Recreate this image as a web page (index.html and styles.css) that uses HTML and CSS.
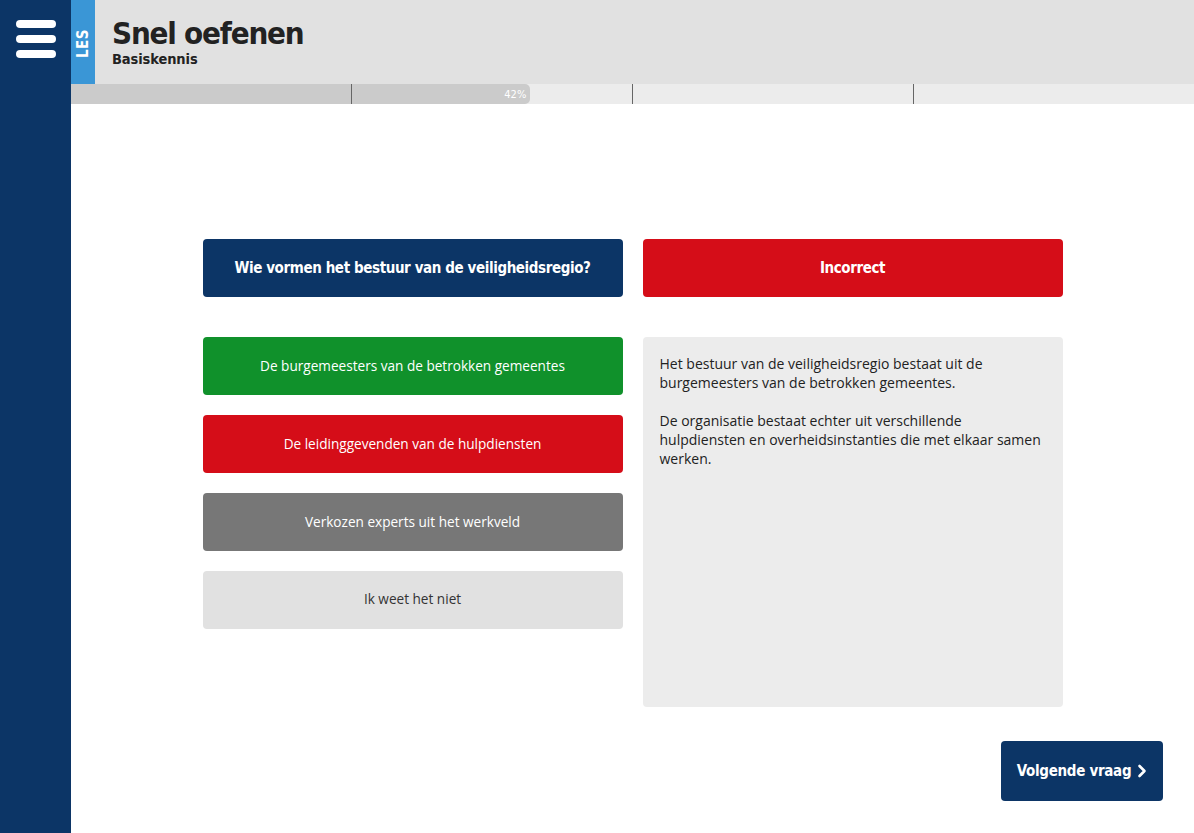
FILE: index.html
```html
<!DOCTYPE html>
<html lang="nl">
<head>
<meta charset="utf-8">
<title>Snel oefenen</title>
<link rel="stylesheet" href="styles.css">
</head>
<body>
<div class="app">
  <aside class="sidebar">
    <button class="menu" aria-label="Menu">
      <span class="bar"></span><span class="bar"></span><span class="bar"></span>
    </button>
  </aside>
  <div class="main">
    <header class="header">
      <div class="tag"><span>LES</span></div>
      <div class="titles">
        <h1 class="title">Snel oefenen</h1>
        <div class="subtitle">Basiskennis</div>
      </div>
    </header>
    <div class="progress">
      <div class="fill" style="width:40.9%"><span>42%</span></div>
      <div class="ticks"><i></i><i></i><i></i><i></i></div>
    </div>
    <section class="content">
      <div class="grid">
        <div class="col">
          <div class="box question">Wie vormen het bestuur van de veiligheidsregio?</div>
          <div class="answers">
            <div class="box answer correct">De burgemeesters van de betrokken gemeentes</div>
            <div class="box answer wrong">De leidinggevenden van de hulpdiensten</div>
            <div class="box answer neutral">Verkozen experts uit het werkveld</div>
            <div class="box answer unknown">Ik weet het niet</div>
          </div>
        </div>
        <div class="col">
          <div class="box result">Incorrect</div>
          <div class="explain">
            <p>Het bestuur van de veiligheidsregio bestaat uit de burgemeesters van de betrokken gemeentes.</p>
            <p>De organisatie bestaat echter uit verschillende hulpdiensten en overheidsinstanties die met elkaar samen werken.</p>
          </div>
        </div>
      </div>
      <div class="footer">
        <button class="next">Volgende vraag <svg width="10" height="14" viewBox="0 0 10 14"><path d="M2.5 2 L7.5 7 L2.5 12" fill="none" stroke="#fff" stroke-width="2.6" stroke-linecap="round" stroke-linejoin="round"/></svg></button>
      </div>
    </section>
  </div>
</div>
</body>
</html>
```

FILE: styles.css
```css
* { box-sizing: border-box; }
html, body { margin: 0; padding: 0; height: 100%; }
body { font-family: "Open Sans", "Noto Sans", sans-serif; color: #222; background: #fff; }

.app { display: flex; height: 833px; }

.sidebar { width: 71px; flex: none; background: #0c3566; }
.menu { display: flex; flex-direction: column; gap: 7px; padding: 0; margin: 20px 0 0 16px; background: none; border: 0; cursor: pointer; }
.bar { display: block; width: 40px; height: 8px; border-radius: 4px; background: #fff; }

.main { flex: 1; display: flex; flex-direction: column; min-width: 0; }

.header { height: 84px; background: #e1e1e1; display: flex; }
.tag { width: 24px; background: #3a96d6; display: flex; align-items: flex-start; justify-content: center; padding-top: 29px; }
.tag span { writing-mode: vertical-rl; transform: rotate(180deg); color: #fff; font-family: "DejaVu Sans Condensed", "DejaVu Sans", sans-serif; font-weight: bold; font-size: 15px; letter-spacing: 0.5px; line-height: 24px; }
.titles { padding: 15px 0 0 17px; }
.title { margin: 0; font-family: "DejaVu Sans Condensed", "DejaVu Sans", sans-serif; font-weight: bold; font-size: 31px; line-height: 36px; color: #222; letter-spacing: -1.2px; }
.subtitle { font-family: "DejaVu Sans Condensed", "DejaVu Sans", sans-serif; font-weight: bold; font-size: 14.5px; line-height: 16px; color: #222; letter-spacing: -0.1px; }

.progress { position: relative; height: 20px; background: #ececec; }
.fill { height: 20px; background: #cbcbcb; border-radius: 0 5px 5px 0; display: flex; justify-content: flex-end; align-items: center; padding-right: 4px; }
.fill span { color: #fff; font-family: "DejaVu Sans Condensed", "DejaVu Sans", sans-serif; font-size: 11px; }
.ticks { position: absolute; inset: 0; display: flex; }
.ticks i { flex: 1; border-right: 1px solid #666; }
.ticks i:last-child { border-right: 0; }

.content { flex: 1; display: flex; flex-direction: column; padding-top: 135px; }
.grid { display: flex; justify-content: center; gap: 20px; }
.col { width: 420px; display: flex; flex-direction: column; gap: 40px; }
.answers { display: flex; flex-direction: column; gap: 20px; }

.box { height: 58px; border-radius: 4px; display: flex; align-items: center; justify-content: center; text-align: center; }
.question, .result { font-family: "DejaVu Sans Condensed", "DejaVu Sans", sans-serif; font-weight: bold; font-size: 15px; letter-spacing: -0.4px; color: #fff; }
.question { background: #0c3566; }
.result { background: #d50d18; }

.answer { font-family: "Open Sans", sans-serif; font-size: 13.6px; color: #fff; padding-bottom: 2px; }
.correct { background: #10912b; }
.wrong { background: #d50d18; }
.neutral { background: #777; }
.unknown { background: #e1e1e1; color: #333; padding-bottom: 4px; }

.explain { height: 370px; background: #ececec; border-radius: 4px; padding: 17px 17px; font-family: "Open Sans", sans-serif; font-size: 14px; line-height: 19px; color: #222; }
.explain p { margin: 0 0 19px; }

.footer { display: flex; justify-content: flex-end; padding: 34px 31px 0 0; }
.next { width: 162px; height: 60px; border: 0; border-radius: 4px; background: #0c3566; color: #fff; font-family: "DejaVu Sans Condensed", "DejaVu Sans", sans-serif; font-weight: bold; font-size: 15px; letter-spacing: -0.3px; display: flex; align-items: center; justify-content: center; gap: 6px; cursor: pointer; }
```
